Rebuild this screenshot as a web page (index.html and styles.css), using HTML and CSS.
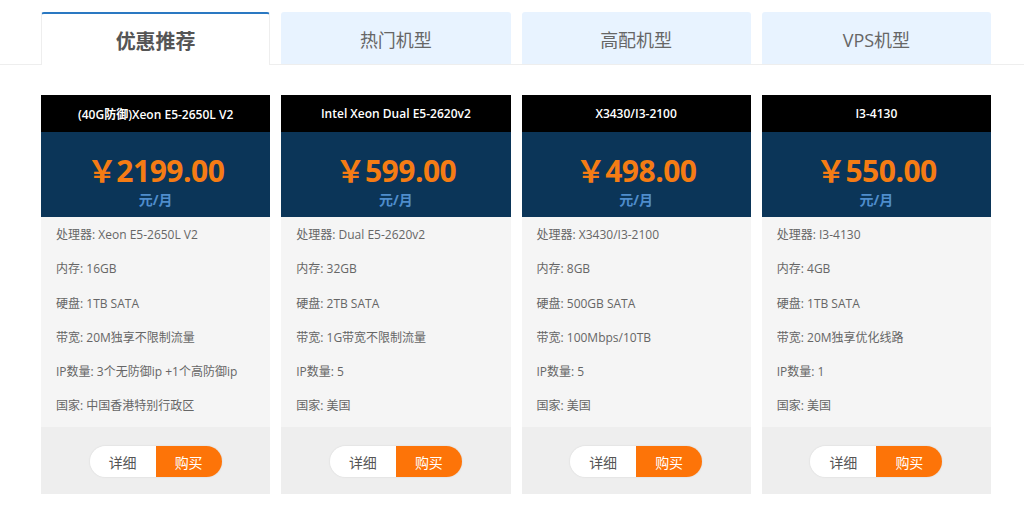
FILE: index.html
```html
<!DOCTYPE html>
<html lang="zh-CN">
<head>
  <meta charset="UTF-8" />
  <title>服务器租用</title>
  <link rel="stylesheet" href="styles.css">
</head>
<body>
  <div class="tabs-bar">
    <div class="tabs">
      <div class="tab active">优惠推荐</div>
      <div class="tab">热门机型</div>
      <div class="tab">高配机型</div>
      <div class="tab">VPS机型</div>
    </div>
  </div>

  <div class="cards">
    <div class="card">
      <div class="card-title">(40G防御)Xeon E5-2650L V2</div>
      <div class="card-price">
        <div class="price">￥2199.00</div>
        <div class="unit">元/月</div>
      </div>
      <ul class="specs">
        <li>处理器: Xeon E5-2650L V2</li>
        <li>内存: 16GB</li>
        <li>硬盘: 1TB SATA</li>
        <li>带宽: 20M独享不限制流量</li>
        <li>IP数量: 3个无防御ip +1个高防御ip</li>
        <li>国家: 中国香港特别行政区</li>
      </ul>
      <div class="card-foot">
        <div class="btns"><a class="btn-detail">详细</a><a class="btn-buy">购买</a></div>
      </div>
    </div>

    <div class="card">
      <div class="card-title">Intel Xeon Dual E5-2620v2</div>
      <div class="card-price">
        <div class="price">￥599.00</div>
        <div class="unit">元/月</div>
      </div>
      <ul class="specs">
        <li>处理器: Dual E5-2620v2</li>
        <li>内存: 32GB</li>
        <li>硬盘: 2TB SATA</li>
        <li>带宽: 1G带宽不限制流量</li>
        <li>IP数量: 5</li>
        <li>国家: 美国</li>
      </ul>
      <div class="card-foot">
        <div class="btns"><a class="btn-detail">详细</a><a class="btn-buy">购买</a></div>
      </div>
    </div>

    <div class="card">
      <div class="card-title">X3430/I3-2100</div>
      <div class="card-price">
        <div class="price">￥498.00</div>
        <div class="unit">元/月</div>
      </div>
      <ul class="specs">
        <li>处理器: X3430/I3-2100</li>
        <li>内存: 8GB</li>
        <li>硬盘: 500GB SATA</li>
        <li>带宽: 100Mbps/10TB</li>
        <li>IP数量: 5</li>
        <li>国家: 美国</li>
      </ul>
      <div class="card-foot">
        <div class="btns"><a class="btn-detail">详细</a><a class="btn-buy">购买</a></div>
      </div>
    </div>

    <div class="card">
      <div class="card-title">I3-4130</div>
      <div class="card-price">
        <div class="price">￥550.00</div>
        <div class="unit">元/月</div>
      </div>
      <ul class="specs">
        <li>处理器: I3-4130</li>
        <li>内存: 4GB</li>
        <li>硬盘: 1TB SATA</li>
        <li>带宽: 20M独享优化线路</li>
        <li>IP数量: 1</li>
        <li>国家: 美国</li>
      </ul>
      <div class="card-foot">
        <div class="btns"><a class="btn-detail">详细</a><a class="btn-buy">购买</a></div>
      </div>
    </div>
  </div>
</body>
</html>
```

FILE: styles.css
```css
/* Basic Reset */
*, *:before, *:after {
  box-sizing: border-box;
  margin: 0;
  padding: 0;
}

body {
  background: #ffffff;
  font-family: "Open Sans", "Noto Sans CJK SC", sans-serif;
  color: #666;
}

.tabs-bar {
  padding-top: 12px;
  border-bottom: 1px solid #eeeeee;
}

.tabs {
  display: grid;
  grid-template-columns: repeat(4, 1fr);
  gap: 11px;
  width: 950px;
  margin-left: 41px;
}

.tab {
  height: 52px;
  display: flex;
  align-items: center;
  justify-content: center;
  background: #e8f3ff;
  border-radius: 3px 3px 0 0;
  font-size: 18px;
  color: #666;
  padding-top: 2px;
}

.tab.active {
  background: #ffffff;
  border: 1px solid #eeeeee;
  border-top: 2px solid #2a78c2;
  border-bottom: none;
  font-size: 20px;
  font-weight: bold;
  color: #555;
  margin-bottom: -1px;
  height: 53px;
}

.cards {
  display: grid;
  grid-template-columns: repeat(4, 1fr);
  gap: 11px;
  width: 950px;
  margin: 30px 0 0 41px;
}

.card {
  background: #f5f5f5;
}

.card-title {
  height: 37px;
  background: #000000;
  color: #ffffff;
  font-size: 12px;
  font-weight: 600;
  display: flex;
  align-items: center;
  justify-content: center;
}

.card-price {
  height: 85px;
  background: #0b3558;
  text-align: center;
  padding-top: 20px;
}

.price {
  color: #f57c14;
  font-size: 30px;
  font-weight: bold;
  line-height: 38px;
  letter-spacing: -0.5px;
}

.unit {
  color: #4f8dcc;
  font-size: 14px;
  font-weight: bold;
  line-height: 18px;
  margin-top: 1px;
}

.specs {
  list-style: none;
  height: 210px;
  padding: 1px 15px 0;
}

.specs li {
  font-size: 12px;
  line-height: 34.3px;
  color: #666;
}

.card-foot {
  height: 67px;
  background: #eeeeee;
  display: flex;
  align-items: center;
  justify-content: center;
  padding-top: 2px;
}

.btns {
  display: flex;
  width: 132px;
  height: 31px;
  border-radius: 16px;
  overflow: hidden;
  box-shadow: 0 0 2px rgba(0, 0, 0, 0.12);
}

.btns a {
  flex: 1;
  display: flex;
  align-items: center;
  justify-content: center;
  font-size: 14px;
}

.btn-detail {
  background: #ffffff;
  color: #555;
}

.btn-buy {
  background: #fd7408;
  color: #ffffff;
}
```
